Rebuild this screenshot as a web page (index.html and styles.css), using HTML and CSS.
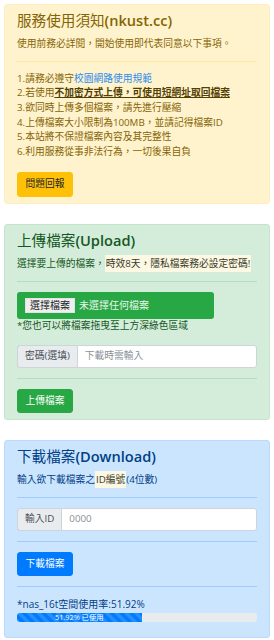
FILE: index.html
```html
<!DOCTYPE html>
<html lang="zh-Hant">
<head>
<meta charset="utf-8">
<link rel="stylesheet" href="styles.css">
</head>
<body>
<div class="page">
  <section class="card card-warning">
    <h4 class="title">服務使用須知<span class="latin">(nkust.cc)</span></h4>
    <p class="lead">使用前務必詳閱，開始使用即代表同意以下事項。</p>
    <hr class="rule rule-warning">
    <ol class="rules">
      <li>1.請務必遵守<a class="link" href="#">校園網路使用規範</a></li>
      <li>2.若使用<a class="strong-link" href="#">不加密方式上傳，可使用短網址取回檔案</a></li>
      <li>3.欲同時上傳多個檔案，請先進行壓縮</li>
      <li>4.上傳檔案大小限制為100MB，並請記得檔案ID</li>
      <li>5.本站將不保證檔案內容及其完整性</li>
      <li>6.利用服務從事非法行為，一切後果自負</li>
    </ol>
    <button class="btn btn-warning">問題回報</button>
  </section>

  <section class="card card-success">
    <h4 class="title">上傳檔案<span class="latin">(Upload)</span></h4>
    <p class="lead">選擇要上傳的檔案，<mark class="mark">時效8天，隱私檔案務必設定密碼!</mark></p>
    <hr class="rule rule-success">
    <div class="file-drop"><span class="file-btn">選擇檔案</span><span class="file-name">未選擇任何檔案</span></div>
    <p class="hint">*您也可以將檔案拖曳至上方深綠色區域</p>
    <div class="input-group">
      <span class="prepend">密碼(選填)</span>
      <input class="field" type="text" placeholder="下載時需輸入">
    </div>
    <hr class="rule rule-success">
    <button class="btn btn-success">上傳檔案</button>
  </section>

  <section class="card card-primary">
    <h4 class="title">下載檔案<span class="latin">(Download)</span></h4>
    <p class="lead">輸入欲下載檔案之<mark class="mark">ID編號</mark>(4位數)</p>
    <hr class="rule rule-primary">
    <div class="input-group">
      <span class="prepend">輸入ID</span>
      <input class="field" type="text" placeholder="0000">
    </div>
    <hr class="rule rule-primary">
    <button class="btn btn-primary">下載檔案</button>
    <hr class="rule rule-primary">
    <p class="usage">*nas_16t空間使用率:51.92%</p>
    <div class="progress"><div class="progress-bar" style="width:51.92%">51.92% 已使用</div></div>
  </section>
</div>
</body>
</html>
```

FILE: styles.css
```css
* { box-sizing: border-box; }
html, body { margin: 0; padding: 0; background: #fff; }
body {
  font-family: "Open Sans", "Noto Sans CJK TC", sans-serif;
  font-size: 9.75px;
  line-height: 1.5;
}
.page {
  padding: 4px 4px;
  display: flex;
  flex-direction: column;
  gap: 20px;
}
.card {
  border: 1px solid transparent;
  border-radius: 3px;
  padding: 7px 12px 6px;
}
.card-warning { background: #fff3cd; border-color: #ffeeba; color: #856404; }
.card-success { background: #d4edda; border-color: #c3e6cb; color: #155724; }
.card-primary { background: #cce5ff; border-color: #b8daff; color: #004085; }

.title {
  margin: 0 0 7px;
  font-size: 14.6px;
  font-weight: 400;
  line-height: 1.2;
}
.latin { font-weight: 600; }
.lead { margin: 0; }
.rule { border: 0; border-top: 1px solid; margin: 9.75px 0; }
.rule-warning { border-color: #ffe8a1; }
.rule-success { border-color: #b1dfbb; }
.rule-primary { border-color: #9fcdff; }

.rules { list-style: none; margin: 0 0 13px; padding: 0; }
.link { color: #2d8cf0; text-decoration: none; }
.strong-link { color: #533f03; font-weight: 700; text-decoration: underline; }

.mark { background: #fcf8e3; color: #3a3a2a; padding: 2px 1px; }

.btn {
  font: inherit;
  border: 1px solid transparent;
  border-radius: 3px;
  padding: 4px 7.5px;
  line-height: 1.5;
  cursor: pointer;
}
.btn-warning { background: #ffc107; border-color: #ffc107; color: #212529; }
.btn-success { background: #28a745; border-color: #28a745; color: #fff; }
.btn-primary { background: #007bff; border-color: #007bff; color: #fff; }

.file-drop {
  width: 197px;
  height: 27px;
  background: #28a745;
  border-radius: 3px;
  padding: 0 8px;
  display: flex;
  align-items: center;
  gap: 4px;
  color: #e8f5ea;
  font-size: 10px;
}
.file-btn {
  background: #efefef;
  color: #222;
  padding: 0 4px;
  border: 1px solid #e3e3e3;
  line-height: 13px;
}
.hint { margin: 0 0 12px; }

.input-group { display: flex; height: 23px; }
.prepend {
  display: flex;
  align-items: center;
  padding: 0 7px;
  background: #e9ecef;
  color: #495057;
  border: 1px solid #ced4da;
  border-right: 0;
  border-radius: 3px 0 0 3px;
}
.field {
  flex: 1;
  min-width: 0;
  font: inherit;
  border: 1px solid #ced4da;
  border-radius: 0 3px 3px 0;
  padding: 0 7px;
  background: #fff;
  color: #495057;
}
.field::placeholder { color: #8a9096; }

.usage { margin: 0 0 1px; font-size: 10px; }
.progress {
  height: 9.75px;
  background: #e9ecef;
  border-radius: 3px;
  overflow: hidden;
  display: flex;
  margin-bottom: 9px;
}
.progress-bar {
  background-color: #007bff;
  background-image: linear-gradient(45deg, rgba(255,255,255,.15) 25%, transparent 25%, transparent 50%, rgba(255,255,255,.15) 50%, rgba(255,255,255,.15) 75%, transparent 75%, transparent);
  background-size: 9.75px 9.75px;
  color: #fff;
  font-size: 7.3px;
  line-height: 9.75px;
  text-align: center;
  white-space: nowrap;
}
```
